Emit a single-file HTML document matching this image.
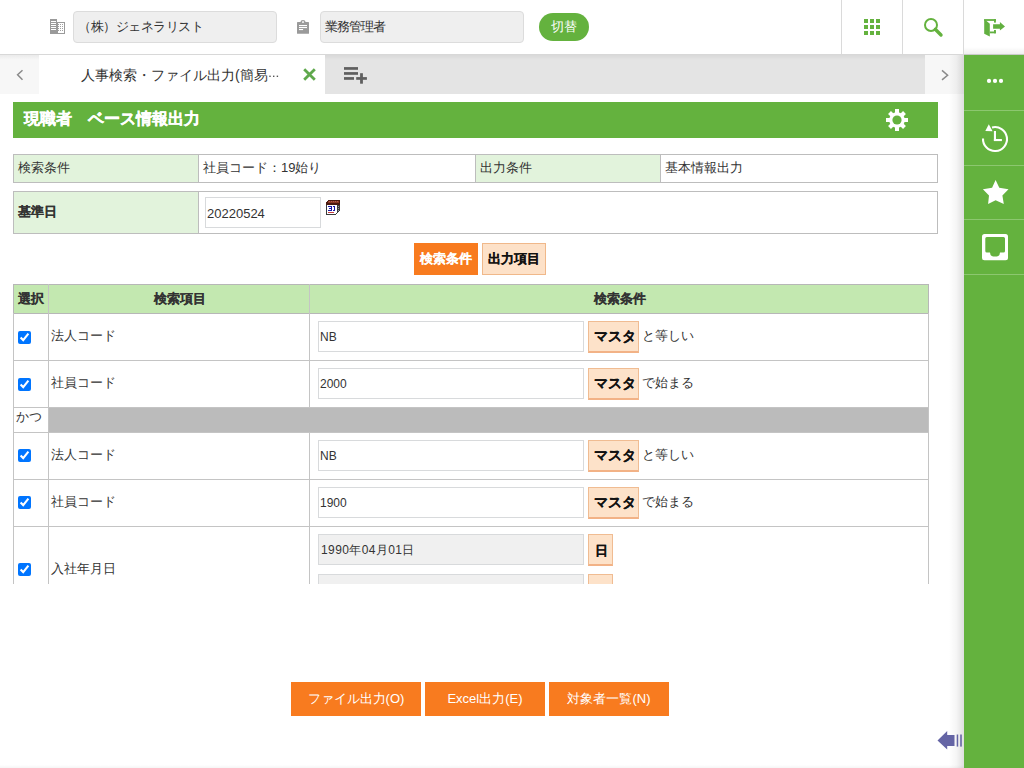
<!DOCTYPE html>
<html><head><meta charset="utf-8">
<style>
*{box-sizing:border-box}
html,body{margin:0;padding:0;width:1024px;height:768px;overflow:hidden;background:#fff;font-family:"Liberation Sans",sans-serif;color:#333;font-size:13px}
.a{position:absolute}
#hdr{left:0;top:0;width:1024px;height:55px;background:#fff;border-bottom:1px solid #d8d8d8}
.hbox{height:32px;top:11px;width:204px;background:#efefef;border:1px solid #dcdcdc;border-radius:4px;font-size:13px;line-height:30px;padding-left:4px;color:#333}
.vdiv{top:0;width:1px;height:54px;background:#dadada}
#tabs{left:0;top:55px;width:964px;height:39px;background:#e4e4e4}
#side{left:964px;top:55px;width:60px;height:713px;background:#64b23e}
.sep{left:964px;width:60px;height:1px;background:#8cc76f}
.cell{position:absolute;border:1px solid #bdbdbd;font-size:13px;line-height:25px;padding-left:4px}
.lab{background:#e2f3dc}
.btn-o{background:#f87b1f;color:#fff;font-weight:bold;text-align:center}
.btn-l{background:#fde1c8;border:1px solid #f0b88a;color:#111;font-weight:bold;text-align:center}
.inp{position:absolute;background:#fff;border:1px solid #d8dadc;font-size:12px;padding-left:1px;line-height:31px !important}
.master{position:absolute;width:51px;height:32px;background:#fde2c9;border:1px solid #f0bc92;border-bottom:2px solid #f2b286;font-weight:bold;color:#111;font-size:14px;text-align:center;line-height:29px;padding-left:2px}
.chk{position:absolute;width:13px;height:13px;background:#1a73e8;border-radius:2px}
.txt{position:absolute;font-size:13px;white-space:nowrap}
.bbtn{position:absolute;top:682px;height:34px;background:#f87b1f;color:#fff;font-size:13px;text-align:center;line-height:34px}
[style*="font-weight:bold"],.btn-o,.btn-l,.master{-webkit-text-stroke:0.15px currentColor}
</style></head><body>

<!-- header -->
<div id="hdr" class="a"></div>
<svg class="a" style="left:50px;top:19px" width="15" height="15" viewBox="0 0 15 15" shape-rendering="crispEdges">
 <rect x="0" y="0" width="7" height="15" fill="#9a9a9a"/>
 <g fill="#fff"><rect x="1" y="2" width="5" height="1"/><rect x="1" y="4" width="5" height="1"/><rect x="1" y="6" width="5" height="1"/><rect x="1" y="8" width="5" height="1"/><rect x="1" y="10" width="5" height="1"/></g>
 <rect x="7" y="3" width="8" height="12" fill="#9a9a9a"/>
 <rect x="8" y="4" width="6" height="10" fill="#fff"/>
 <g fill="#a0a0a0"><rect x="8" y="5" width="1" height="1"/><rect x="10" y="5" width="1" height="1"/><rect x="12" y="5" width="1" height="1"/><rect x="8" y="7" width="1" height="1"/><rect x="10" y="7" width="1" height="1"/><rect x="12" y="7" width="1" height="1"/><rect x="8" y="9" width="1" height="1"/><rect x="10" y="9" width="1" height="1"/><rect x="12" y="9" width="1" height="1"/><rect x="8" y="11" width="1" height="1"/><rect x="10" y="11" width="1" height="1"/><rect x="12" y="11" width="1" height="1"/></g>
</svg>
<div class="a hbox" style="left:73px;letter-spacing:-0.5px;padding-left:4px">（株）ジェネラリスト</div>
<svg class="a" style="left:297px;top:20px" width="12" height="14" viewBox="0 0 12 14">
 <rect x="0" y="2" width="12" height="11.8" rx="0.6" fill="#9a9a9a"/>
 <path d="M3.2 2.4 Q3.6 0 6 0 Q8.4 0 8.8 2.4 Z" fill="#9a9a9a"/>
 <rect x="5.1" y="1.3" width="1.8" height="1.5" fill="#fff"/>
 <rect x="2" y="5" width="8" height="1.1" fill="#fff"/><rect x="2" y="7" width="8" height="1.1" fill="#fff"/><rect x="2" y="9" width="4.1" height="1.1" fill="#fff"/>
</svg>
<div class="a hbox" style="left:320px;padding-left:4px;letter-spacing:-1px">業務管理者</div>
<div class="a" style="left:539px;top:13px;width:50px;height:28px;border-radius:14px;background:#64b23e;color:#fff;font-size:13px;line-height:28px;text-align:center">切替</div>
<div class="a vdiv" style="left:841px"></div>
<div class="a vdiv" style="left:902px"></div>
<div class="a vdiv" style="left:963px"></div>
<svg class="a" style="left:864px;top:19px" width="16" height="16" viewBox="0 0 16 16" fill="#64b23e">
 <rect x="0" y="0" width="4" height="4"/><rect x="6" y="0" width="4" height="4"/><rect x="12" y="0" width="4" height="4"/>
 <rect x="0" y="6" width="4" height="4"/><rect x="6" y="6" width="4" height="4"/><rect x="12" y="6" width="4" height="4"/>
 <rect x="0" y="12" width="4" height="4"/><rect x="6" y="12" width="4" height="4"/><rect x="12" y="12" width="4" height="4"/>
</svg>
<svg class="a" style="left:922px;top:16px" width="22" height="22" viewBox="0 0 22 22">
 <circle cx="9" cy="9" r="6" fill="none" stroke="#64b23e" stroke-width="2"/>
 <line x1="13.3" y1="13.3" x2="19" y2="19" stroke="#64b23e" stroke-width="3.4" stroke-linecap="round"/>
</svg>
<svg class="a" style="left:980px;top:14px" width="28" height="28" viewBox="0 0 28 28" fill="#62b040">
 <path d="M4.2 5.1 L9.8 9.7 V22.6 L4.2 19.7 Z"/>
 <rect x="4.2" y="5.1" width="11.7" height="1.8"/><rect x="14" y="5.1" width="1.9" height="3.5"/><rect x="14" y="16" width="1.9" height="3.3"/><rect x="9.8" y="17.5" width="6.1" height="1.8"/>
 <path d="M13.1 10.2 H19.9 V8 L25 12.4 L19.9 16.6 V14.8 H13.1 Z"/>
</svg>

<!-- tabs -->
<div id="tabs" class="a"></div>
<div class="a" style="left:0;top:55px;width:39px;height:39px;background:#f7f7f7"></div>
<div class="a" style="left:0;top:55px;width:964px;height:5px;background:linear-gradient(rgba(0,0,0,0.05),rgba(0,0,0,0))"></div>
<svg class="a" style="left:14px;top:66px" width="12" height="18" viewBox="0 0 12 18"><path d="M8.5 4.3 L3.6 8.8 L8.5 13.7" fill="none" stroke="#8a8a8a" stroke-width="1.5"/></svg>
<div class="a" style="left:39px;top:55px;width:286px;height:39px;background:#fff"></div>
<div class="txt" style="left:81px;top:66.5px;font-size:14px;color:#333">人事検索・ファイル出力(簡易</div>
<svg class="a" style="left:268px;top:74px" width="12" height="4" viewBox="0 0 12 4" fill="#555"><rect x="1.3" y="1.6" width="1.4" height="1.4"/><rect x="5" y="1.6" width="1.4" height="1.4"/><rect x="8.7" y="1.6" width="1.4" height="1.4"/></svg>
<svg class="a" style="left:303px;top:68px" width="13" height="13" viewBox="0 0 13 13"><path d="M1.2 1.2 L11.8 11.8 M11.8 1.2 L1.2 11.8" stroke="#5fa84c" stroke-width="2.8"/></svg>
<svg class="a" style="left:344px;top:67px" width="24" height="17" viewBox="0 0 24 17" fill="#5f5f5f">
 <rect x="0" y="0.1" width="14" height="2.7"/><rect x="0" y="5.1" width="14" height="2.7"/><rect x="0" y="10.1" width="10" height="2.7"/>
 <rect x="12.2" y="10.1" width="10.7" height="2.7"/><rect x="16.1" y="6.2" width="2.8" height="10.5"/>
</svg>
<div class="a" style="left:925px;top:55px;width:39px;height:39px;background:#f7f7f7"></div>
<svg class="a" style="left:936px;top:66px" width="16" height="18" viewBox="0 0 16 18"><path d="M6 4.4 L11.6 9.2 L6 13.9" fill="none" stroke="#8a8a8a" stroke-width="1.5"/></svg>

<!-- side -->
<div class="a" style="left:949px;top:55px;width:15px;height:713px;background:linear-gradient(90deg,rgba(0,0,0,0),rgba(0,0,0,0.04) 50%,rgba(0,0,0,0.13))"></div>
<div class="a" style="left:964px;top:47px;width:60px;height:8px;background:linear-gradient(rgba(0,0,0,0),rgba(0,0,0,0.07))"></div>
<div id="side" class="a"></div>
<div class="a sep" style="top:110px"></div>
<div class="a sep" style="top:165px"></div>
<div class="a sep" style="top:219px"></div>
<div class="a sep" style="top:274px"></div>
<svg class="a" style="left:986px;top:76px" width="18" height="10" viewBox="0 0 18 10" fill="#fff"><circle cx="3" cy="4.9" r="2.1"/><circle cx="9" cy="4.9" r="2.1"/><circle cx="15" cy="4.9" r="2.1"/></svg>
<svg class="a" style="left:976px;top:120px" width="36" height="36" viewBox="0 0 36 36">
 <path d="M7 18.5 A12 12 0 1 0 16 7.4" fill="none" stroke="#fff" stroke-width="2.1"/>
 <path d="M12.8 4.3 L9.3 10.9 L16.6 11.3 Z" fill="#fff"/>
 <rect x="17.9" y="11" width="2.1" height="10" fill="#fff"/><rect x="17.9" y="19" width="8" height="2.1" fill="#fff"/>
</svg>
<svg class="a" style="left:976px;top:174px" width="36" height="36" viewBox="976 174 36 36"><path d="M995.6 180.1 L999.3 187.8 L1008.5 189.2 L1002.4 195.5 L1003.8 204 L995.6 200.3 L988.1 204 L989 195.5 L982.9 189.2 L992.1 187.8 Z" fill="#fff"/></svg>
<svg class="a" style="left:978px;top:228px" width="34" height="36" viewBox="0 0 34 36">
 <rect x="4" y="6" width="26" height="26.2" rx="2.5" fill="#fff"/>
 <path d="M7.3 10.4 Q7.3 8.9 8.8 8.9 H25.5 Q27 8.9 27 10.4 V23.1 Q27 24.6 25.5 24.6 H22 Q22 28.6 17 28.6 Q12 28.6 12 24.6 H8.8 Q7.3 24.6 7.3 23.1 Z" fill="#64b23e"/>
</svg>

<!-- title -->
<div class="a" style="left:13px;top:102px;width:925px;height:36px;background:#64b23e"></div>
<div class="txt" style="left:24px;top:109px;font-size:16px;font-weight:bold;color:#fff;-webkit-text-stroke:0.3px #fff">現職者　ベース情報出力</div>
<svg class="a" style="left:885px;top:108px" width="24" height="24" viewBox="0 0 24 24">
 <g fill="#fff" transform="translate(12 12)">
  <rect x="-2" y="-11" width="4" height="22"/>
  <rect x="-2" y="-10.6" width="4" height="21.2" transform="rotate(45)"/>
  <rect x="-2" y="-11" width="4" height="22" transform="rotate(90)"/>
  <rect x="-2" y="-10.6" width="4" height="21.2" transform="rotate(135)"/>
  <circle r="7.8"/>
 </g>
 <circle cx="12" cy="12" r="4.6" fill="#64b23e"/>
</svg>

<!-- calendar -->
<!-- table 1 -->
<div class="cell lab" style="left:13px;top:154px;width:186px;height:29px">検索条件</div>
<div class="cell" style="left:198px;top:154px;width:278px;height:29px">社員コード：19始り</div>
<div class="cell lab" style="left:475px;top:154px;width:186px;height:29px">出力条件</div>
<div class="cell" style="left:660px;top:154px;width:278px;height:29px">基本情報出力</div>

<!-- table 2 -->
<div class="cell lab" style="left:13px;top:191px;width:186px;height:43px;line-height:39px;font-weight:bold">基準日</div>
<div class="cell" style="left:198px;top:191px;width:740px;height:43px"></div>
<div class="inp" style="left:205px;top:197px;width:116px;height:31px;line-height:30px;padding-left:1px;font-size:13px">20220524</div>
<svg class="a" style="left:326px;top:200px" width="14" height="15" viewBox="0 0 14 15" shape-rendering="crispEdges">
 <path d="M2 0 H14 V5 H0 V2 H1 V1 H2 Z" fill="#4a1a10"/>
 <rect x="2" y="1" width="11" height="2" fill="#8a3a28"/>
 <rect x="3" y="1" width="1" height="1" fill="#b06050"/><rect x="5" y="1" width="1" height="1" fill="#b06050"/><rect x="7" y="1" width="1" height="1" fill="#b06050"/><rect x="9" y="1" width="1" height="1" fill="#b06050"/><rect x="11" y="1" width="1" height="1" fill="#b06050"/>
 <rect x="0" y="5" width="1" height="10" fill="#3a3a3a"/>
 <rect x="0" y="14" width="10" height="1" fill="#3a3a3a"/>
 <rect x="1" y="5" width="10" height="9" fill="#fff"/>
 <path d="M11 5 H14 V10 L10 14 V13 L11 12 Z" fill="#3c3c3c"/>
 <rect x="12" y="6" width="1" height="1" fill="#999"/><rect x="12" y="8" width="1" height="1" fill="#999"/><rect x="12" y="10" width="1" height="1" fill="#999"/>
 <g fill="#1a1aa8">
  <rect x="2" y="6" width="4" height="1"/><rect x="5" y="6" width="1" height="5"/><rect x="3" y="8" width="3" height="1"/><rect x="2" y="10" width="4" height="1"/>
  <rect x="7" y="6" width="1" height="1"/><rect x="8" y="6" width="1" height="5"/><rect x="6.8" y="10" width="2.4" height="1"/>
 </g>
 <rect x="2" y="12" width="6" height="1" fill="#c84040"/>
</svg>

<!-- switch buttons -->
<div class="a btn-o" style="left:414px;top:243px;width:64px;height:32px;line-height:32px;font-size:13px">検索条件</div>
<div class="a btn-l" style="left:482px;top:243px;width:64px;height:32px;line-height:30px;font-size:13px">出力項目</div>

<!-- table 3 -->
<div id="t3" class="a" style="left:0;top:0;width:964px;height:584px;overflow:hidden">
 <div class="a" style="left:13px;top:284px;width:916px;height:30px;background:#c3e8b0;border:1px solid #b7b7b7"></div>
 <div class="a" style="left:48px;top:284px;width:1px;height:300px;background:#c4c4c4"></div>
 <div class="a" style="left:309px;top:284px;width:1px;height:300px;background:#c4c4c4"></div>
 <div class="a" style="left:13px;top:313px;width:1px;height:300px;background:#c4c4c4"></div>
 <div class="a" style="left:928px;top:313px;width:1px;height:300px;background:#c4c4c4"></div>
 <div class="txt" style="left:18px;top:290px;font-weight:bold">選択</div>
 <div class="txt" style="left:154px;top:290px;font-weight:bold">検索項目</div>
 <div class="txt" style="left:594px;top:290px;font-weight:bold">検索条件</div>

 <div class="a" style="left:13px;top:360px;width:916px;height:1px;background:#c4c4c4"></div>
 <div class="a" style="left:13px;top:407px;width:916px;height:1px;background:#c4c4c4"></div>
 <div class="a" style="left:49px;top:408px;width:879px;height:24px;background:#bbbbbb"></div>
 <div class="a" style="left:13px;top:432px;width:916px;height:1px;background:#c4c4c4"></div>
 <div class="a" style="left:13px;top:479px;width:916px;height:1px;background:#c4c4c4"></div>
 <div class="a" style="left:13px;top:526px;width:916px;height:1px;background:#c4c4c4"></div>

 <input type="checkbox" checked class="a" style="left:18px;top:331px;margin:0;width:13px;height:13px">
 <input type="checkbox" checked class="a" style="left:18px;top:378px;margin:0;width:13px;height:13px">
 <input type="checkbox" checked class="a" style="left:18px;top:449px;margin:0;width:13px;height:13px">
 <input type="checkbox" checked class="a" style="left:18px;top:496px;margin:0;width:13px;height:13px">
 <input type="checkbox" checked class="a" style="left:18px;top:563px;margin:0;width:13px;height:13px">

 <div class="txt" style="left:51px;top:327px">法人コード</div>
 <div class="txt" style="left:51px;top:374px">社員コード</div>
 <div class="txt" style="left:16px;top:408px">かつ</div>
 <div class="txt" style="left:51px;top:446px">法人コード</div>
 <div class="txt" style="left:51px;top:493px">社員コード</div>
 <div class="txt" style="left:51px;top:560px">入社年月日</div>

 <div class="inp" style="left:318px;top:321px;width:266px;height:31px;line-height:29px">NB</div>
 <div class="master" style="left:588px;top:321px">マスタ</div>
 <div class="txt" style="left:642px;top:327px">と等しい</div>
 <div class="inp" style="left:318px;top:368px;width:266px;height:31px;line-height:29px">2000</div>
 <div class="master" style="left:588px;top:368px">マスタ</div>
 <div class="txt" style="left:642px;top:374px">で始まる</div>
 <div class="inp" style="left:318px;top:440px;width:266px;height:31px;line-height:29px">NB</div>
 <div class="master" style="left:588px;top:440px">マスタ</div>
 <div class="txt" style="left:642px;top:446px">と等しい</div>
 <div class="inp" style="left:318px;top:487px;width:266px;height:31px;line-height:29px">1900</div>
 <div class="master" style="left:588px;top:487px">マスタ</div>
 <div class="txt" style="left:642px;top:493px">で始まる</div>

 <div class="inp" style="left:318px;top:534px;width:266px;height:31px;line-height:29px;background:#f0f0f0;letter-spacing:0.4px;padding-left:2px">1990年04月01日</div>
 <div class="master" style="left:588px;top:534px;width:25px;font-size:13px;line-height:31px">日</div>
 <div class="inp" style="left:318px;top:574px;width:266px;height:31px;line-height:29px;background:#f0f0f0;letter-spacing:0.4px;padding-left:2px">2022年05月24日</div>
 <div class="master" style="left:588px;top:574px;width:25px;font-size:13px;line-height:31px">日</div>
</div>

<!-- bottom buttons -->
<div class="bbtn" style="left:291px;width:130px">ファイル出力(O)</div>
<div class="bbtn" style="left:425px;width:120px">Excel出力(E)</div>
<div class="bbtn" style="left:549px;width:120px">対象者一覧(N)</div>

<svg class="a" style="left:937px;top:730px" width="26" height="21" viewBox="0 0 26 21" fill="#6565a5">
 <path d="M0.5 10.6 L10.2 0.9 V5.1 H17.5 V16 H10.2 V19.6 Z"/>
 <rect x="19.7" y="4.5" width="1.5" height="12.1"/><rect x="23.2" y="4.5" width="1.6" height="12.1"/>
</svg>

<div class="a" style="left:0;top:765px;width:964px;height:3px;background:linear-gradient(rgba(0,0,0,0),rgba(0,0,0,0.04))"></div>
</body></html>
